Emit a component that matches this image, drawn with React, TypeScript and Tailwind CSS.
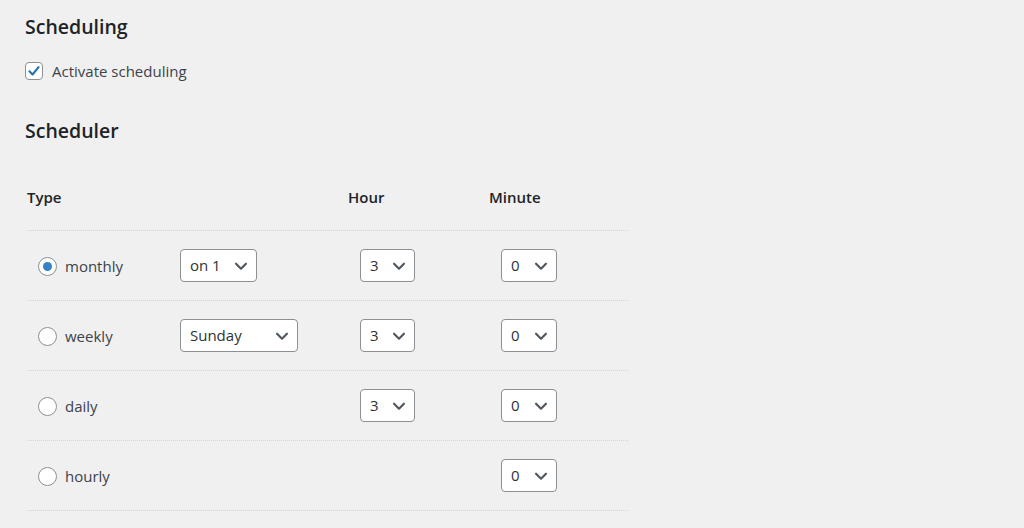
import React from "react";

const font = { fontFamily: '"Segoe UI", "Open Sans", "Noto Sans", sans-serif' };

function Chevron() {
  return (
    <svg width="18" height="18" viewBox="0 0 20 20" className="shrink-0">
      <path d="M4.5 7.5 L10 13 L15.5 7.5" fill="none" stroke="#50575e" strokeWidth="2.4" strokeLinecap="round" strokeLinejoin="round" />
    </svg>
  );
}

function Select({ value, width }: { value: string; width: string }) {
  return (
    <div
      className={`${width} h-[33px] flex items-center justify-between bg-white border border-[#8c8f94] rounded-[4px] pl-[9px] pr-[6px] text-[15px] text-[#2c3338]`}
    >
      <span>{value}</span>
      <Chevron />
    </div>
  );
}

function Radio({ checked }: { checked?: boolean }) {
  return (
    <div className="w-[19px] h-[19px] rounded-full border border-[#8c8f94] bg-white flex items-center justify-center shrink-0">
      {checked && <div className="w-[9px] h-[9px] rounded-full bg-[#3582c4]" />}
    </div>
  );
}

const rows = [
  { type: "monthly", checked: true, extra: { v: "on 1", w: "w-[77px]" }, hour: true },
  { type: "weekly", checked: false, extra: { v: "Sunday", w: "w-[118px]" }, hour: true },
  { type: "daily", checked: false, extra: null, hour: true },
  { type: "hourly", checked: false, extra: null, hour: false },
];

export default function App() {
  return (
    <div className="min-h-[528px] w-full bg-[#f0f0f1] pl-[25px] pt-[14px]" style={font}>
      <h2 className="text-[19.5px] font-semibold text-[#1d2327] leading-[26px]">Scheduling</h2>
      <label className="flex items-center gap-[9px] mt-[22px] text-[15px] text-[#3c434a]">
        <div className="w-[18px] h-[18px] rounded-[4px] border border-[#8c8f94] bg-white flex items-center justify-center">
          <svg width="14" height="14" viewBox="0 0 20 20">
            <path d="M3.5 10.5 L8 15 L16.5 4.5" fill="none" stroke="#2271b1" strokeWidth="3" strokeLinecap="round" strokeLinejoin="round" />
          </svg>
        </div>
        <span className="leading-[18px]">Activate scheduling</span>
      </label>
      <h2 className="text-[19.5px] font-semibold text-[#1d2327] leading-[26px] mt-[38px]">Scheduler</h2>

      <div className="ml-[2px] mt-[40px] w-[601px]">
        <div className="grid grid-cols-[141px_180px_141px_139px] h-[46px] items-start text-[15px] font-semibold leading-[26px] text-[#1d2327]">
          <div>Type</div>
          <div></div>
          <div>Hour</div>
          <div>Minute</div>
        </div>
        {rows.map((r) => (
          <div
            key={r.type}
            className="grid grid-cols-[141px_180px_141px_139px] h-[70px] items-center border-t border-dotted border-[#d5d5d6] text-[15px] text-[#3c434a]"
          >
            <div className="pl-[11px] flex items-center gap-[8px] pt-[2px]">
              <Radio checked={r.checked} />
              <span>{r.type}</span>
            </div>
            <div className="pl-[12px]">{r.extra && <Select value={r.extra.v} width={r.extra.w} />}</div>
            <div className="pl-[12px]">{r.hour && <Select value="3" width="w-[55px]" />}</div>
            <div className="pl-[12px]">
              <Select value="0" width="w-[56px]" />
            </div>
          </div>
        ))}
        <div className="border-t border-dotted border-[#d5d5d6]" />
      </div>
    </div>
  );
}
